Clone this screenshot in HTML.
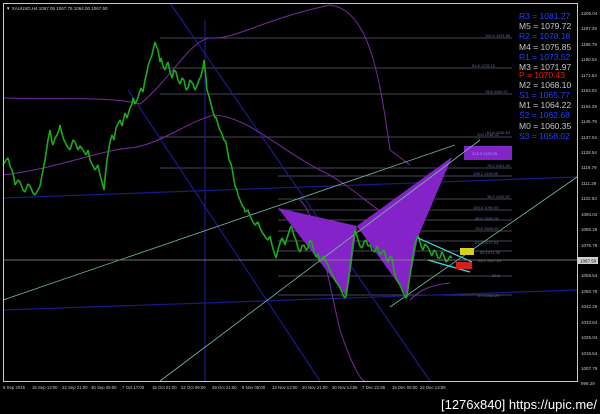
<!DOCTYPE html>
<html><head><style>
html,body{margin:0;padding:0;background:#000;width:600px;height:414px;overflow:hidden}
svg{display:block}
text{font-family:"Liberation Sans",sans-serif}
</style></head><body>
<svg width="600" height="414" viewBox="0 0 600 414" xmlns="http://www.w3.org/2000/svg">
<rect width="600" height="414" fill="#000"/>
<g stroke="#5a6070" stroke-width="0.8">
<line x1="160" y1="38" x2="512" y2="38"/>
<line x1="160" y1="68" x2="512" y2="68"/>
<line x1="160" y1="94" x2="512" y2="94"/>
<line x1="160" y1="137" x2="512" y2="137"/>
<line x1="160" y1="168" x2="512" y2="168"/>
<line x1="278" y1="176" x2="512" y2="176"/>
<line x1="278" y1="199" x2="512" y2="199"/>
<line x1="278" y1="210" x2="512" y2="210"/>
<line x1="278" y1="220" x2="512" y2="220"/>
<line x1="278" y1="231" x2="512" y2="231"/>
<line x1="278" y1="241" x2="512" y2="241"/>
<line x1="278" y1="251" x2="512" y2="251"/>
<line x1="278" y1="276" x2="512" y2="276"/>
<line x1="278" y1="295" x2="512" y2="295"/>
</g>
<g stroke="#1a1a8a" stroke-width="1.2" fill="none">
<line x1="170" y1="3" x2="430" y2="381"/>
<line x1="128" y1="90" x2="320" y2="381"/>
<line x1="205" y1="20" x2="205" y2="381"/>
<line x1="3" y1="198" x2="577" y2="177"/>
<line x1="3" y1="310" x2="577" y2="290"/>
</g>
<g stroke="#7a2aa0" stroke-width="1" fill="none">
<path d="M3,98 C60,100 110,96 140,104 C170,80 190,40 210,38 C235,40 260,20 330,5 C370,10 380,80 390,150 L410,165"/>
<path d="M3,175 C60,168 100,150 130,148 C160,145 190,120 215,115 C250,118 280,150 320,170 C360,190 370,210 410,228"/>
<path d="M300,200 C320,220 330,290 340,330 C350,360 360,381 365,381"/>
<path d="M410,300 C420,290 430,285 450,283"/>
</g>
<polygon points="278,208 357,226 347,297" fill="#8424c8"/>
<polygon points="357,226 407,296 418,237 452,157" fill="#8424c8"/>
<rect x="464" y="146" width="48" height="14" fill="#8424c8"/>
<g stroke="#6fc0a0" stroke-width="0.8" fill="none">
<line x1="160" y1="381" x2="480" y2="140"/>
<line x1="390" y1="307" x2="577" y2="177"/>
<line x1="3" y1="300" x2="455" y2="145"/>
</g>
<polyline fill="none" stroke="#1ea81e" stroke-width="1.6" stroke-linejoin="bevel" points="3,165 6,160 8,158 10,166 12,170 14,178 15,185 18,180 20,182 23,190 25,192 28,184 30,186 33,193 35,195 38,190 40,186 43,170 45,160 48,140 50,130 52,142 53,145 55,138 57,135 59,130 60,125 62,134 64,140 67,146 70,150 73,140 75,142 78,150 80,146 83,150 86,155 88,150 90,160 93,166 95,170 98,165 100,175 102,182 104,190 105,178 107,160 110,142 112,135 114,140 116,128 118,124 120,120 122,126 125,113 127,118 130,108 132,104 133,98 135,104 137,100 139,94 141,88 143,92 145,80 147,72 148,66 150,60 152,55 154,46 155,42 157,48 158,50 160,62 161,58 163,66 165,70 167,64 168,62 170,72 172,78 174,70 176,72 178,80 180,84 182,78 184,80 186,90 188,88 190,80 193,84 195,90 197,86 199,80 201,76 203,68 204,60 206,78 207,90 209,96 210,100 212,108 213,112 215,118 216,117 218,124 219,128 221,132 222,134 224,140 226,142 228,154 229,160 231,164 232,168 234,180 235,186 237,190 238,195 240,200 242,205 244,208 245,212 248,210 250,216 253,222 255,225 258,222 260,228 262,232 264,235 266,238 268,240 270,236 272,245 274,252 276,258 278,250 279,246 281,240 282,238 284,242 285,245 287,238 289,232 291,226 292,228 294,236 296,240 298,248 300,252 302,246 304,245 306,250 308,248 310,240 312,243 314,252 316,257 318,254 320,262 322,258 324,256 326,262 328,265 330,270 332,274 334,278 336,282 338,284 340,288 342,292 343,295 345,298 346,296 348,282 349,275 351,262 352,250 354,236 355,230 357,236 358,240 360,246 362,248 364,242 366,240 368,246 370,245 372,250 375,252 377,246 380,255 382,252 384,250 386,258 388,262 390,256 392,258 394,270 396,278 398,282 400,285 402,290 404,294 406,298 407,296 409,282 410,275 412,262 413,255 415,244 416,240 418,236 419,238 421,246 423,250 425,244 428,247 430,252 432,256 434,250 436,252 438,258 440,258 442,252 444,256 446,262 448,260 450,256 452,258"/>
<g stroke="#40e0e0" stroke-width="1.2">
<line x1="418" y1="238" x2="472" y2="262"/>
<line x1="428" y1="260" x2="470" y2="272"/>
</g>
<line x1="3" y1="260" x2="577" y2="260" stroke="#909090" stroke-width="0.7"/>
<rect x="460" y="248" width="14" height="7" fill="#d8d020"/>
<rect x="456" y="262" width="16" height="7" fill="#d02020"/>
<g font-size="4" fill="#6070b0">
<text x="485" y="37">100.0 1191.80</text>
<text x="472" y="67">61.8 1176.12</text>
<text x="485" y="93">78.6 1169.07</text>
<text x="477" y="136">200 1146.41</text>
<text x="487" y="134">61.8 1136.63</text>
<text x="472" y="155" fill="#a0a0ff">313.9 1126.25</text>
<text x="487" y="167">76.2 1121.09</text>
<text x="473" y="175">138.2 1119.05</text>
<text x="487" y="198">38.2 1102.97</text>
<text x="473" y="209">100.0 1090.90</text>
<text x="475" y="220">88.6 1090.28</text>
<text x="475" y="230">78.6 1085.29</text>
<text x="475" y="244">61.8 1077.24</text>
<text x="480" y="254">50 1071.35</text>
<text x="478" y="262">38.2 1067.89</text>
<text x="492" y="277">23.6</text>
<text x="478" y="297">0.0 1052.29</text>
</g>
<rect x="3.5" y="3.5" width="574" height="378" fill="none" stroke="#c8c8c8" stroke-width="1"/>
<text x="6" y="10" font-size="4.5" fill="#d0d0d0">▼ XAUUSD,H4  1067.05 1067.75 1064.00 1067.50</text>
<g font-size="8.5" font-family="Liberation Sans">
<text x="519" y="19" fill="#2040ff">R3 = 1081.27</text>
<text x="519" y="29" fill="#c8c8c8">M5 = 1079.72</text>
<text x="519" y="39" fill="#2040ff">R2 = 1078.18</text>
<text x="519" y="50" fill="#c8c8c8">M4 = 1075.85</text>
<text x="519" y="60" fill="#2040ff">R1 = 1073.52</text>
<text x="519" y="70" fill="#c8c8c8">M3 = 1071.97</text>
<text x="519" y="78" fill="#ff1010">P  = 1070.43</text>
<text x="519" y="88" fill="#c8c8c8">M2 = 1068.10</text>
<text x="519" y="98" fill="#2040ff">S1 = 1065.77</text>
<text x="519" y="108" fill="#c8c8c8">M1 = 1064.22</text>
<text x="519" y="118" fill="#2040ff">S2 = 1062.68</text>
<text x="519" y="129" fill="#c8c8c8">M0 = 1060.35</text>
<text x="519" y="139" fill="#2040ff">S3 = 1058.02</text>
</g>
<g font-size="4.5" fill="#c8c8c8">
<text x="581" y="15">1206.04</text><text x="581" y="30">1197.29</text><text x="581" y="46">1188.79</text><text x="581" y="61">1180.04</text><text x="581" y="77">1171.54</text><text x="581" y="92">1163.04</text><text x="581" y="108">1154.29</text><text x="581" y="123">1145.79</text><text x="581" y="139">1137.04</text><text x="581" y="154">1128.54</text><text x="581" y="169">1119.79</text><text x="581" y="185">1111.29</text><text x="581" y="200">1102.54</text><text x="581" y="216">1094.04</text><text x="581" y="231">1085.29</text><text x="581" y="247">1076.79</text><text x="581" y="277">1059.54</text><text x="581" y="293">1050.79</text><text x="581" y="308">1042.29</text><text x="581" y="324">1033.54</text><text x="581" y="339">1025.04</text><text x="581" y="355">1016.54</text><text x="581" y="370">1007.79</text><text x="581" y="385">999.29</text>
</g>
<rect x="578" y="257" width="20" height="7" fill="#d0d0d0"/>
<text x="580" y="262.5" font-size="4.5" fill="#000">1067.50</text>
<g font-size="4.3" fill="#c8c8c8">
<text x="3" y="389">8 Sep 2015</text><text x="32" y="389">15 Sep 13:00</text><text x="62" y="389">22 Sep 21:00</text><text x="91" y="389">30 Sep 05:00</text><text x="122" y="389">7 Oct 17:00</text><text x="152" y="389">15 Oct 01:00</text><text x="181" y="389">22 Oct 09:00</text><text x="212" y="389">29 Oct 21:00</text><text x="242" y="389">6 Nov 05:00</text><text x="272" y="389">13 Nov 13:00</text><text x="302" y="389">20 Nov 21:00</text><text x="332" y="389">30 Nov 13:55</text><text x="362" y="389">7 Dec 21:55</text><text x="392" y="389">15 Dec 05:00</text><text x="420" y="389">22 Dec 13:00</text>
</g>
<text x="441" y="409" font-size="13" fill="#fff" font-family="Liberation Sans" textLength="156" lengthAdjust="spacingAndGlyphs">[1276x840] https://upic.me/</text>
</svg>
</body></html>
